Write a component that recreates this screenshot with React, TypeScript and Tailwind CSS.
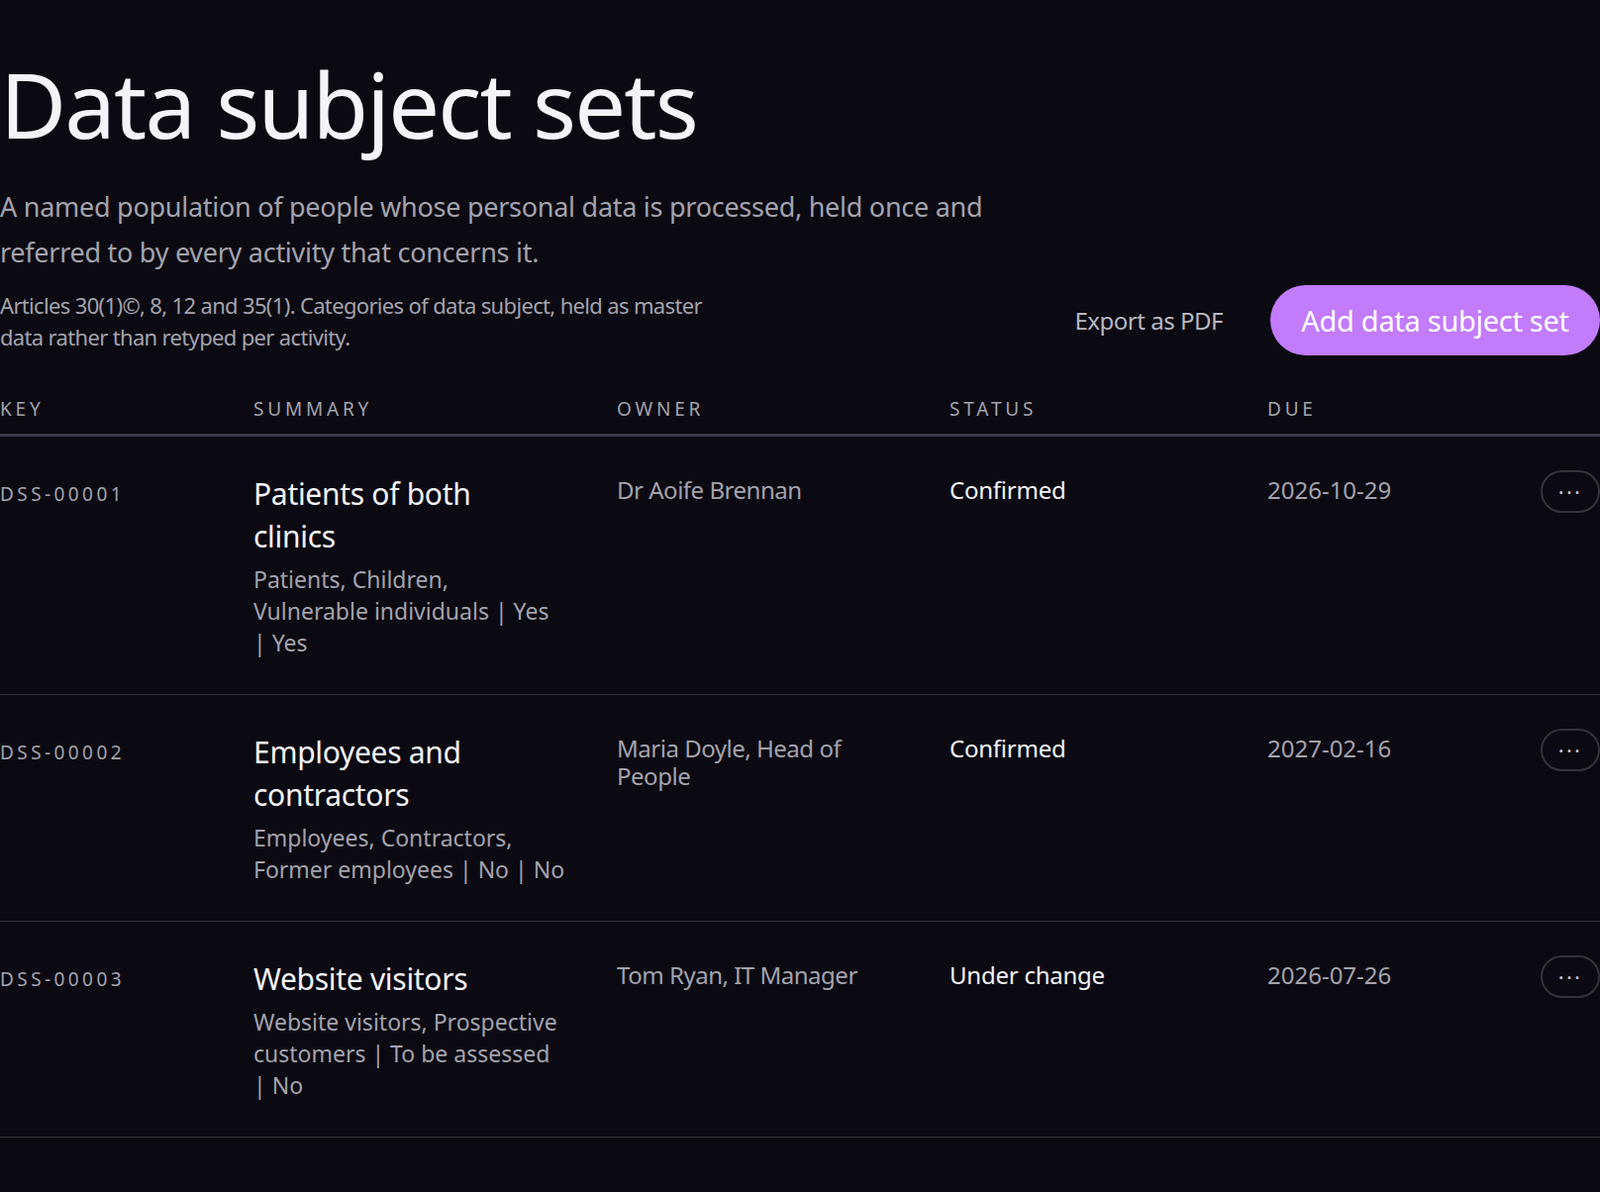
const rows = [
  {
    key: "DSS-00001",
    title: "Patients of both clinics",
    sub: "Patients, Children, Vulnerable individuals | Yes | Yes",
    owner: "Dr Aoife Brennan",
    status: "Confirmed",
    due: "2026-10-29",
  },
  {
    key: "DSS-00002",
    title: "Employees and contractors",
    sub: "Employees, Contractors, Former employees | No | No",
    owner: "Maria Doyle, Head of People",
    status: "Confirmed",
    due: "2027-02-16",
  },
  {
    key: "DSS-00003",
    title: "Website visitors",
    sub: "Website visitors, Prospective customers | To be assessed | No",
    owner: "Tom Ryan, IT Manager",
    status: "Under change",
    due: "2026-07-26",
  },
];

export default function App() {
  return (
    <div className="min-h-[1204px] w-[1616px] overflow-hidden bg-[#0b0a12] text-[#f1f0f5] font-['Inter',sans-serif]">
      <div className="pt-[52px]">
        <h1 className="text-[92px] leading-[106px] font-normal tracking-[-0.02em] text-[#f4f3f8]">Data subject sets</h1>
        <p className="mt-[28px] w-[1030px] text-[27px] leading-[46px] text-[#a4a3ad] tracking-[-0.01em]">
          A named population of people whose personal data is processed, held once and referred to by every activity that concerns it.
        </p>
        <div className="mt-[10px] flex items-center justify-between">
          <p className="w-[730px] text-[22px] leading-[32px] text-[#a4a3ad] tracking-[-0.03em]">
            Articles 30(1)©, 8, 12 and 35(1). Categories of data subject, held as master data rather than retyped per activity.
          </p>
          <div className="flex items-center gap-[48px]">
            <button className="text-[24px] text-[#b9b8c1] tracking-[-0.02em]">Export as PDF</button>
            <button className="h-[71px] w-[333px] rounded-full bg-[#c17bfb] text-[29px] text-white tracking-[-0.01em]">
              Add data subject set
            </button>
          </div>
        </div>
        <div className="mt-[40px] grid grid-cols-[256px_367px_336px_321px_1fr] border-b-[3px] border-[#3a3846] pb-[10px] text-[19px] tracking-[0.2em] text-[#a4a3ad]">
          <div>KEY</div>
          <div>SUMMARY</div>
          <div>OWNER</div>
          <div>STATUS</div>
          <div>DUE</div>
        </div>
        {rows.map((r) => (
          <div key={r.key} className="grid grid-cols-[256px_367px_336px_321px_1fr] border-b border-[#34323e] pt-[36px] pb-[36px]">
            <div className="pt-[8px] text-[19px] tracking-[0.18em] text-[#a4a3ad]">{r.key}</div>
            <div>
              <div className="w-[290px] text-[30px] leading-[43px] text-[#f4f3f8] tracking-[-0.01em]">{r.title}</div>
              <div className="mt-[6px] w-[315px] text-[23px] leading-[32px] text-[#a4a3ad]">{r.sub}</div>
            </div>
            <div className="w-[250px] pt-[4px] text-[24px] leading-[28px] text-[#a4a3ad] tracking-[-0.02em]">{r.owner}</div>
            <div className="pt-[4px] text-[24px] leading-[28px] text-[#f4f3f8] tracking-[-0.01em]">{r.status}</div>
            <div className="flex items-start justify-between pt-[4px]">
              <span className="text-[24px] leading-[28px] text-[#a4a3ad]">{r.due}</span>
              <button className="-mt-[6px] flex h-[43px] w-[60px] items-center justify-center rounded-full border-2 border-[#34323e] text-[22px] leading-none tracking-[0.1em] text-[#c8c7d0]">
                ···
              </button>
            </div>
          </div>
        ))}
      </div>
    </div>
  );
}
